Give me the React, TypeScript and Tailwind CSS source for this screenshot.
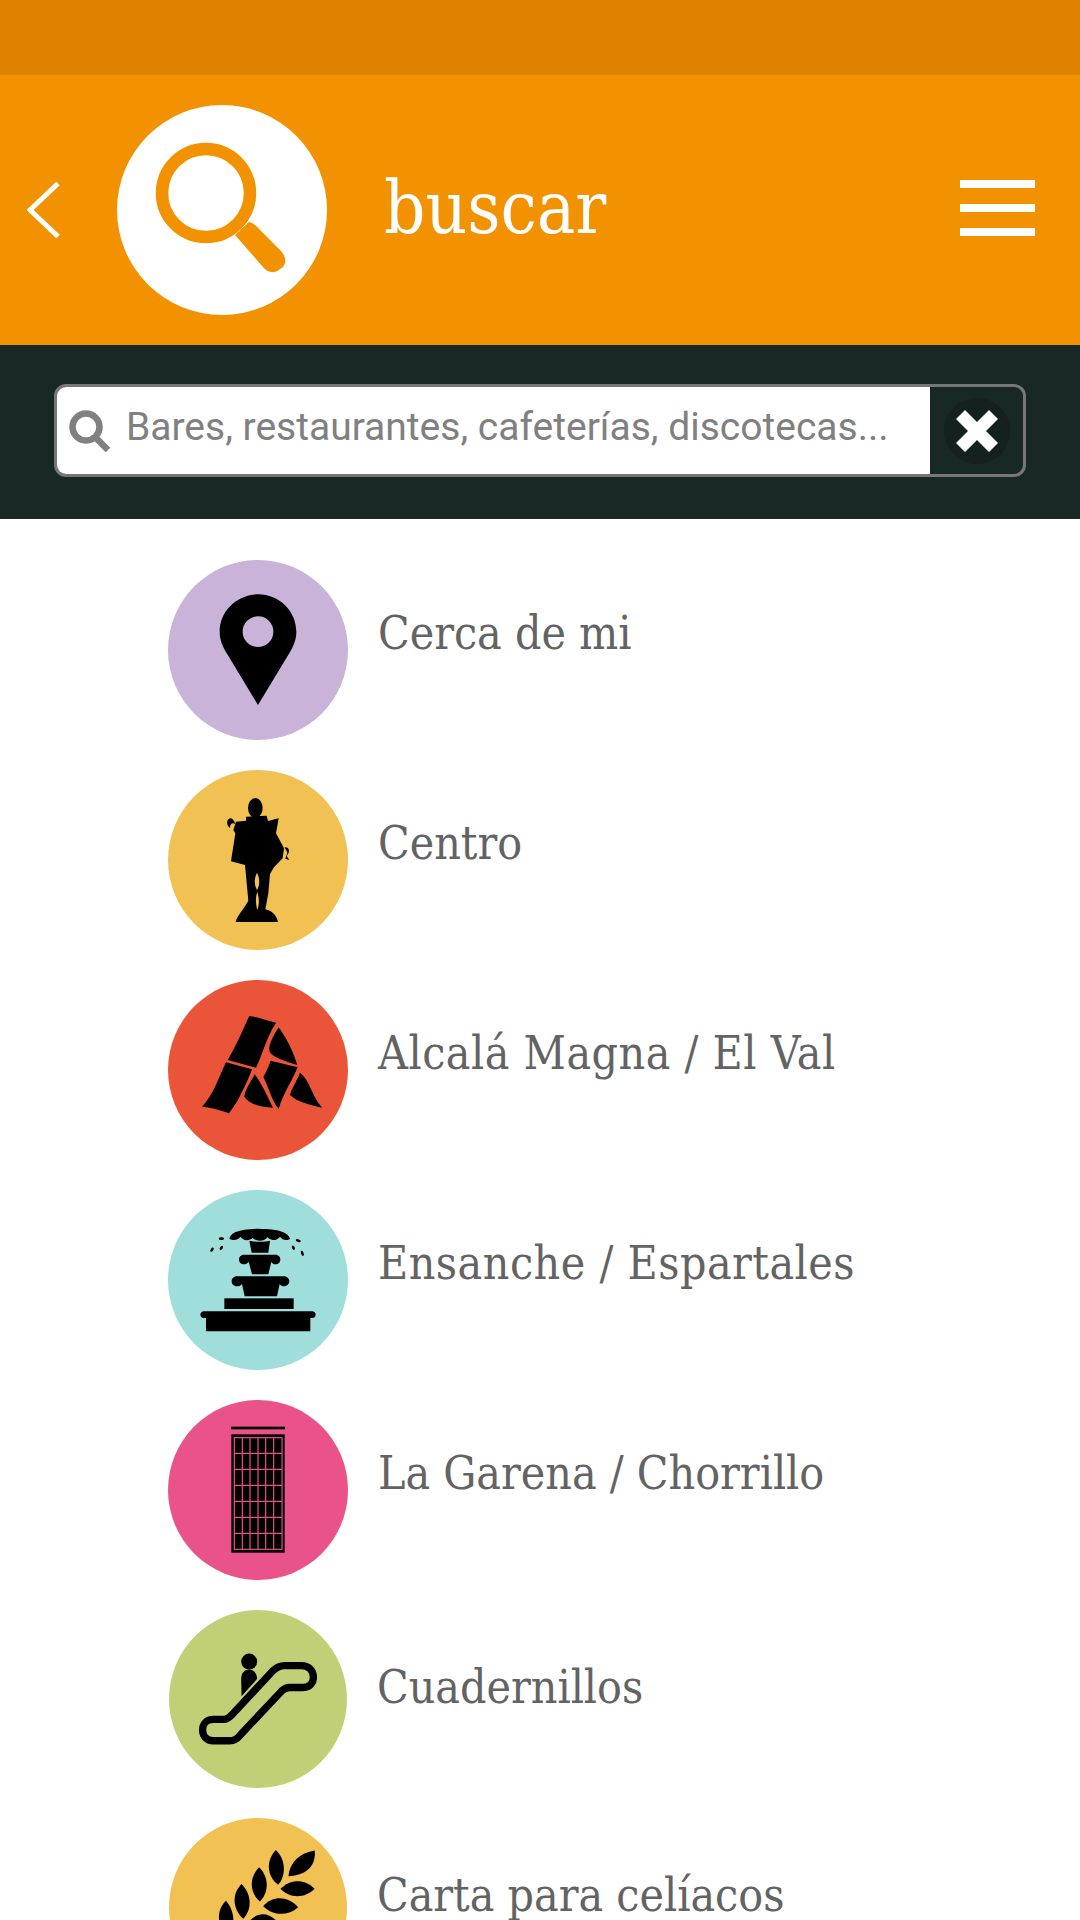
import { ReactNode } from "react";

const slab = "[font-family:'DejaVu_Serif_Condensed','DejaVu_Serif',serif]";

function PinIcon() {
  return (
    <svg viewBox="54 30 540 540" className="w-full h-full">
      <path
        fillRule="evenodd"
        d="M324 133C260 133 209 184 209 245C209 270 218 290 232 313L324 465L416 313C430 290 439 270 439 245C439 184 388 133 324 133ZM324 199A46 46 0 1 1 324 291A46 46 0 1 1 324 199Z"
      />
    </svg>
  );
}

function StatueIcon() {
  return (
    <svg viewBox="54 660 540 540" className="w-full h-full">
      <ellipse cx="316" cy="774" rx="22" ry="30" />
      <path
        fillRule="evenodd"
        d="M288 800L350 797L354 813L386 805L378 850L402 895L398 925L372 952L360 972L355 1030L346 1078C365 1082 380 1095 384 1116H257C262 1095 280 1080 295 1052L285 945L243 934L256 850L250 840L258 815L288 812ZM321 968C312 985 312 1005 321 1020C330 1005 330 985 321 968ZM322 1025C315 1045 318 1065 322 1080C328 1065 328 1045 322 1025Z"
      />
      <path d="M256 822C250 802 238 800 232 812C230 822 234 830 240 834C240 822 246 816 256 822Z" />
      <path d="M404 893C412 888 420 900 416 908L410 918L418 930L406 926L412 908C410 900 406 898 404 893Z" />
    </svg>
  );
}

function AlcalaIcon() {
  return (
    <svg viewBox="54 30 540 540" className="w-full h-full">
      <path d="M298 138C325 142 350 152 378 158C350 200 335 260 318 293L233 270C260 225 280 175 298 138Z" />
      <path d="M228 277L306 298C290 340 265 395 237 430C210 420 180 412 156 410C190 375 205 325 228 277Z" />
      <path d="M386 172C410 205 430 245 442 285C410 275 375 265 362 250C350 235 365 205 386 172Z" />
      <path d="M362 272L443 292C430 325 400 370 386 417C365 390 355 350 340 320C350 305 355 290 362 272Z" />
      <path d="M314 313C335 340 350 375 369 413C340 413 300 405 283 380C285 360 300 340 314 313Z" />
      <path d="M450 308C480 330 485 380 517 413C480 405 440 395 420 375C425 355 440 335 450 308Z" />
    </svg>
  );
}

function FountainIcon() {
  return (
    <svg viewBox="54 30 540 540" className="w-full h-full">
      <path d="M238 176C245 156 265 149 325 146C390 148 410 155 421 176C412 182 398 182 390 170C380 182 365 184 352 172C345 184 320 186 308 174C296 184 278 182 272 170C262 182 248 182 238 176Z" />
      <path d="M298 182C310 186 345 186 360 182L355 218H305Z" />
      <path d="M282 224H376C386 224 391 231 391 239C391 247 384 253 376 253C370 253 366 249 364 245L355 283H306L296 245C294 249 288 253 282 253C274 253 267 247 267 239C267 231 272 224 282 224Z" />
      <path d="M260 289H402C411 289 418 296 418 304C418 312 411 319 402 319C396 319 392 316 389 312L381 349H284L276 312C273 316 268 319 260 319C251 319 245 312 245 304C245 296 251 289 260 289Z" />
      <rect x="223" y="355" width="208" height="32" />
      <path d="M162 394H486C492 394 497 398 497 404C497 410 492 414 486 414H481V454H168V414H162C156 414 151 410 151 404C151 398 156 394 162 394Z" />
      <ellipse cx="214" cy="176" rx="8" ry="4" />
      <ellipse cx="186" cy="209" rx="4" ry="7" transform="rotate(35 186 209)" />
      <ellipse cx="214" cy="204" rx="4" ry="7" transform="rotate(35 214 204)" />
      <ellipse cx="445" cy="182" rx="8" ry="4" transform="rotate(20 445 182)" />
      <ellipse cx="430" cy="203" rx="4" ry="7" transform="rotate(-25 430 203)" />
      <ellipse cx="457" cy="220" rx="4" ry="8" transform="rotate(-20 457 220)" />
    </svg>
  );
}

function BuildingIcon() {
  const cols = [277, 300, 324, 347, 371];
  const rows = [190, 238, 286, 334, 382, 430];
  return (
    <svg viewBox="54 30 540 540" className="w-full h-full">
      <rect x="243" y="110" width="162" height="8" />
      <rect x="244" y="133" width="160" height="355" />
      <g stroke="#ea5389" strokeWidth="3.5" fill="none">
        <rect x="253" y="143" width="143" height="335" />
        {cols.map((x) => (
          <line key={x} x1={x} y1="143" x2={x} y2="478" />
        ))}
        {rows.map((y) => (
          <line key={y} x1="253" y1={y} x2="396" y2={y} />
        ))}
      </g>
    </svg>
  );
}

function EscalatorIcon() {
  return (
    <svg viewBox="57 33 535 535" className="w-full h-full">
      <circle cx="298" cy="188" r="24" />
      <path d="M274 240C274 222 285 212 298 212C312 212 322 225 322 240L275 292Z" />
      <path
        fill="none"
        stroke="#000"
        strokeWidth="22"
        d="M190 362H222C232 362 238 356 245 349L370 215C380 205 390 200 405 200H455C478 200 491 216 491 235C491 254 478 266 458 266H420C410 266 402 270 395 277L270 410C262 420 252 426 240 426H190C170 426 158 412 158 394C158 376 170 362 190 362Z"
      />
    </svg>
  );
}

function WheatIcon() {
  return (
    <svg viewBox="57 657 535 535" className="w-full h-full">
      <path d="M495 755C500 800 470 830 416 832C420 790 450 762 495 755Z" />
      <path d="M378 753C408 780 410 830 385 858C350 830 348 785 378 753Z" />
      <path d="M495 870C465 900 420 900 392 870C420 840 465 838 495 870Z" />
      <path d="M328 805C358 835 358 880 330 908C298 880 298 835 328 805Z" />
      <path d="M445 925C415 952 370 952 340 922C370 888 415 892 445 925Z" />
      <path d="M275 855C305 885 308 930 280 960C248 930 245 885 275 855Z" />
      <path d="M228 906C255 935 258 985 235 1010C200 985 198 935 228 906Z" />
      <path d="M388 975C355 1005 320 1000 296 970C325 935 360 940 388 975Z" />
    </svg>
  );
}

type Item = {
  label: string;
  color: string;
  icon: ReactNode;
  shrink?: boolean;
  wide?: boolean;
};

const items: Item[] = [
  { label: "Cerca de mi", color: "bg-[#c9b3d8]", icon: <PinIcon /> },
  { label: "Centro", color: "bg-[#f2c153]", icon: <StatueIcon /> },
  { label: "Alcalá Magna / El Val", color: "bg-[#ea5539]", icon: <AlcalaIcon />, wide: true },
  { label: "Ensanche / Espartales", color: "bg-[#9fdeda]", icon: <FountainIcon />, wide: true },
  { label: "La Garena / Chorrillo", color: "bg-[#ea5389]", icon: <BuildingIcon /> },
  { label: "Cuadernillos", color: "bg-[#c1d077]", icon: <EscalatorIcon />, shrink: true },
  { label: "Carta para celíacos", color: "bg-[#f2c153]", icon: <WheatIcon />, shrink: true },
];

function Row({ item }: { item: Item }) {
  return (
    <div className="flex items-start">
      <div
        className={
          item.shrink
            ? `w-[178px] h-[178px] ml-px shrink-0 rounded-full overflow-hidden ${item.color}`
            : `w-[180px] h-[180px] shrink-0 rounded-full overflow-hidden ${item.color}`
        }
      >
        {item.icon}
      </div>
      <span
        className={`ml-[30px] text-[46px] leading-[64px] text-[#636363] whitespace-nowrap ${slab} ${
          item.shrink ? "mt-[45px]" : "mt-[41px]"
        } ${item.wide ? "tracking-[0.5px]" : ""}`}
      >
        {item.label}
      </span>
    </div>
  );
}

export default function App() {
  return (
    <div className="w-[1080px] h-[1920px] overflow-hidden bg-white">
      <div className="h-[75px] bg-[#de8200]" />

      <header className="h-[270px] bg-[#f39200] flex items-center">
        <svg viewBox="0 0 33 56" className="ml-[27px] w-[33px] h-[56px] shrink-0">
          <path d="M31 1.5L3 28L31 54.5" fill="none" stroke="#fff" strokeWidth="5" />
        </svg>
        <div className="ml-[57px] w-[210px] h-[210px] shrink-0 rounded-full bg-white">
          <svg viewBox="0 0 210 210" className="w-full h-full">
            <circle cx="89" cy="88" r="44" fill="none" stroke="#f39200" strokeWidth="12.5" />
            <path
              d="M118 130L132 117C137 118 140 122 143 125L163 145C170 152 170 160 163 164C157 169 151 168 146 162Z"
              fill="#f39200"
            />
          </svg>
        </div>
        <h1 className={`ml-[57px] mb-[4px] text-[72px] leading-none text-white font-normal ${slab}`}>buscar</h1>
        <div className="ml-auto mr-[45px] mb-[4px] w-[75px] flex flex-col gap-[16px]">
          <div className="h-[8px] bg-white" />
          <div className="h-[8px] bg-white" />
          <div className="h-[8px] bg-white" />
        </div>
      </header>

      <div className="h-[174px] bg-[#182825] px-[54px] pt-[39px]">
        <div className="h-[93px] flex border-[3px] border-[#777777] rounded-[12px] overflow-hidden">
          <div className="w-[873px] bg-white flex items-center">
            <svg viewBox="0 0 42 42" className="ml-[12px] w-[42px] h-[42px] shrink-0">
              <circle cx="17" cy="17" r="13.5" fill="none" stroke="#808080" strokeWidth="6.5" />
              <line x1="26" y1="27" x2="39" y2="40" stroke="#808080" strokeWidth="6.5" />
            </svg>
            <input
              readOnly
              placeholder="Bares, restaurantes, cafeterías, discotecas..."
              className="ml-[15px] flex-1 min-w-0 mb-[6px] outline-none bg-transparent text-[39px] placeholder-[#808080] font-['Roboto',sans-serif]"
            />
          </div>
          <div className="flex-1 flex items-center justify-center">
            <div className="w-[66px] h-[66px] rounded-full bg-[#14211e] flex items-center justify-center">
              <svg viewBox="0 0 42 42" className="w-[42px] h-[42px]">
                <path d="M9 0L21 12L33 0L42 9L30 21L42 33L33 42L21 30L9 42L0 33L12 21L0 9Z" fill="#fff" />
              </svg>
            </div>
          </div>
        </div>
      </div>

      <div className="pt-[41px] pl-[168px] flex flex-col gap-[30px]">
        {items.map((item) => (
          <Row key={item.label} item={item} />
        ))}
      </div>
    </div>
  );
}
